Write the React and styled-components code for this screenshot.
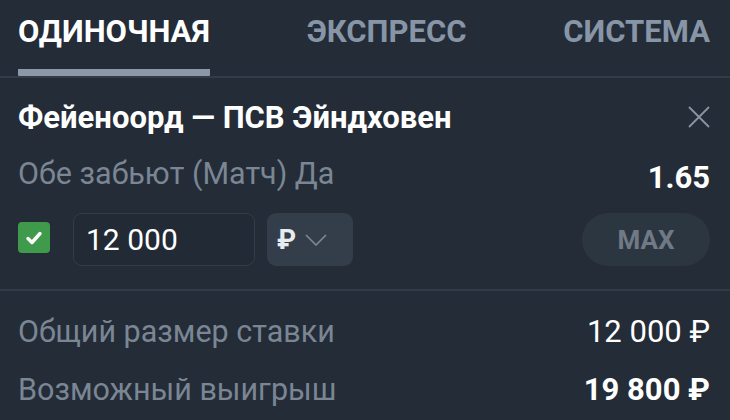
import React from "react";
import styled, { createGlobalStyle } from "styled-components";

const GlobalStyle = createGlobalStyle`
  html, body { margin: 0; padding: 0; background: #232c37; }
  body { font-family: Roboto, "Noto Sans", Arial, sans-serif; }
  * { box-sizing: border-box; }
`;

const Slip = styled.div`
  width: 730px;
  height: 420px;
  overflow: hidden;
  background: #232c37;
  color: #ffffff;
`;

const Tabs = styled.div`
  display: flex;
  justify-content: space-between;
  padding: 0 20px 0 18px;
  border-bottom: 2px solid #323c48;
`;

const Tab = styled.div`
  height: 76px;
  padding-top: 16px;
  font-size: 31px;
  line-height: 31px;
  font-weight: 700;
  color: ${(p) => (p.$active ? "#ffffff" : "#8795a7")};
  border-bottom: 7px solid ${(p) => (p.$active ? "#8d98a6" : "transparent")};
  border-radius: 0 0 1px 1px;
`;

const Bet = styled.div`
  padding: 15px 20px 23px 18px;
  border-bottom: 2px solid #323c48;
`;

const Row = styled.div`
  display: flex;
  align-items: center;
  justify-content: space-between;
  height: ${(p) => p.$h}px;
`;

const Title = styled.div`
  font-size: 31px;
  line-height: 31px;
  font-weight: 700;
  color: #ffffff;
`;

const Close = styled.button`
  width: 22px;
  height: 22px;
  padding: 0;
  border: 0;
  background: none;
  display: flex;
  color: #8a95a2;
`;

const Market = styled.div`
  font-size: 30.5px;
  line-height: 31px;
  color: #7b8694;
`;

const Odds = styled.div`
  font-size: 31px;
  line-height: 31px;
  font-weight: 700;
  color: #ffffff;
  margin-top: 8px;
`;

const Controls = styled.div`
  display: flex;
  align-items: center;
  height: 53px;
  margin-top: 8px;
`;

const Check = styled.span`
  width: 32px;
  height: 31px;
  margin-top: -4px;
  border-radius: 4px;
  background: #3f9a4b;
  display: flex;
  align-items: center;
  justify-content: center;
  margin-right: 23px;
`;

const Amount = styled.div`
  width: 182px;
  height: 53px;
  border: 1.5px solid #323d4a;
  border-radius: 9px;
  background: #212a35;
  display: flex;
  align-items: center;
  padding-left: 12px;
  font-size: 30px;
  color: #ffffff;
`;

const Currency = styled.div`
  width: 86px;
  height: 53px;
  margin-left: 12px;
  border-radius: 9px;
  background: #333e4a;
  display: flex;
  align-items: center;
  padding-left: 10px;
  gap: 9px;
  font-size: 27px;
  font-weight: 700;
  color: #e9ecef;
`;

const Max = styled.button`
  margin-left: auto;
  width: 128px;
  height: 53px;
  border: 0;
  border-radius: 27px;
  background: #2c3641;
  color: #6f7a86;
  font-family: Roboto, Arial, sans-serif;
  font-size: 26px;
  font-weight: 700;
  padding: 0;
`;

const Summary = styled.div`
  padding: 11px 20px 0 18px;
`;

const Label = styled.div`
  font-size: 30.5px;
  line-height: 31px;
  color: #7b8694;
`;

const Value = styled.div`
  font-size: 31px;
  line-height: 31px;
  font-weight: ${(p) => (p.$bold ? 700 : 400)};
  color: #ffffff;
`;

export default function App() {
  return (
    <Slip>
      <GlobalStyle />
      <Tabs>
        <Tab $active>ОДИНОЧНАЯ</Tab>
        <Tab>ЭКСПРЕСС</Tab>
        <Tab>СИСТЕМА</Tab>
      </Tabs>
      <Bet>
        <Row $h={48}>
          <Title>Фейеноорд — ПСВ Эйндховен</Title>
          <Close aria-label="close">
            <svg width="22" height="22" viewBox="0 0 22 22">
              <path d="M1 1L21 21M21 1L1 21" stroke="currentColor" strokeWidth="1.8" />
            </svg>
          </Close>
        </Row>
        <Row $h={64}>
          <Market>Обе забьют (Матч) Да</Market>
          <Odds>1.65</Odds>
        </Row>
        <Controls>
          <Check>
            <svg width="20" height="20" viewBox="0 0 20 20">
              <path d="M4 10.5L8 14.5L16 5.5" fill="none" stroke="#fff" strokeWidth="3.4" strokeLinecap="round" strokeLinejoin="round" />
            </svg>
          </Check>
          <Amount>12 000</Amount>
          <Currency>
            ₽
            <svg width="22" height="12" viewBox="0 0 22 12">
              <path d="M1 1L11 11L21 1" fill="none" stroke="#7d8896" strokeWidth="1.6" />
            </svg>
          </Currency>
          <Max>MAX</Max>
        </Controls>
      </Bet>
      <Summary>
        <Row $h={58}>
          <Label>Общий размер ставки</Label>
          <Value>12 000 ₽</Value>
        </Row>
        <Row $h={58}>
          <Label>Возможный выигрыш</Label>
          <Value $bold>19 800 ₽</Value>
        </Row>
      </Summary>
    </Slip>
  );
}
